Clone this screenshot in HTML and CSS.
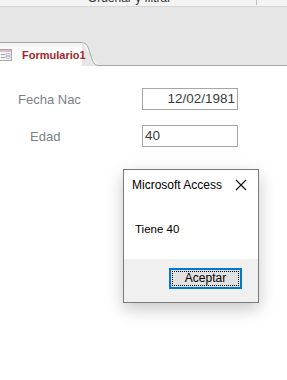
FILE: index.html
```html
<!DOCTYPE html>
<html lang="es">
<head>
    <meta charset="UTF-8">
    <title>Formulario1</title>
    <link rel="stylesheet" href="styles.css">
</head>
<body>
    <div class="ribbon-bottom">
        <span class="ribbon-group">Ordenar y filtrar</span>
        <span class="ribbon-sep"></span>
    </div>
    <div class="ribbon-space"></div>

    <div class="tab-strip">
        <div class="tab">
            <svg class="tab-icon" width="13" height="12" viewBox="0 0 13 12">
                <rect x="0.5" y="0.5" width="12" height="11" fill="#f4f4f4" stroke="#b7a3ad"/>
                <rect x="1" y="1" width="11" height="2" fill="#e2b9c8"/>
                <rect x="2" y="5" width="4" height="1" fill="#9aa6b4"/>
                <rect x="7" y="4.5" width="4" height="2" fill="#fff" stroke="#9aa6b4" stroke-width="0.6"/>
                <rect x="2" y="8" width="4" height="1" fill="#9aa6b4"/>
                <rect x="7" y="7.5" width="4" height="2" fill="#fff" stroke="#9aa6b4" stroke-width="0.6"/>
            </svg>
            <span class="tab-title">Formulario1</span>
        </div>
        <svg class="tab-edge" width="16" height="24" viewBox="0 0 16 24">
            <path d="M0 0.5 Q4 0.5 5.5 4 L11 19.5 Q12.5 23.5 16 23.5" fill="#fdfdfd" stroke="#a8a8a8"/>
        </svg>
        <div class="tab-fill"></div>
    </div>

    <main class="form">
        <div class="form-row">
            <label class="field-label">Fecha Nac</label>
            <div class="field-box right">12/02/1981</div>
        </div>
        <div class="form-row">
            <label class="field-label indent">Edad</label>
            <div class="field-box">40</div>
        </div>

        <div class="msgbox">
            <div class="msgbox-title">
                <span>Microsoft Access</span>
                <svg width="12" height="12" viewBox="0 0 12 12">
                    <path d="M1 1 L11 11 M11 1 L1 11" stroke="#111" stroke-width="1.1"/>
                </svg>
            </div>
            <div class="msgbox-body">Tiene 40</div>
            <div class="msgbox-footer">
                <button class="msgbox-button"><span>Aceptar</span></button>
            </div>
        </div>
    </main>
</body>
</html>
```

FILE: styles.css
```css
* {
    margin: 0;
    padding: 0;
    box-sizing: border-box;
}

body {
    width: 287px;
    height: 380px;
    overflow: hidden;
    background-color: #fff;
    font-family: "Liberation Sans", Arial, sans-serif;
}

.ribbon-bottom {
    height: 7px;
    background-color: #f3f3f3;
    border-bottom: 1px solid #d5d5d5;
    display: flex;
    justify-content: center;
    align-items: flex-end;
    position: relative;
    overflow: hidden;
}

.ribbon-group {
    font-size: 12px;
    line-height: 12px;
    color: #333;
    margin-bottom: 2px;
    margin-right: 28px;
}

.ribbon-sep {
    position: absolute;
    left: 256px;
    top: 0;
    width: 1px;
    height: 5px;
    background-color: #bcbcbc;
}

.ribbon-space {
    height: 35px;
    background-color: #e6e6e6;
}

.tab-strip {
    height: 24px;
    display: flex;
    background-color: #e6e6e6;
}

.tab {
    width: 82px;
    flex: none;
    display: flex;
    align-items: center;
    border-top: 1px solid #a8a8a8;
    background: linear-gradient(#f3f3f3, #ffffff 40%);
    padding-top: 1px;
    white-space: nowrap;
}

.tab-icon {
    flex: none;
    margin-left: -1px;
    margin-right: 10px;
}

.tab-title {
    font-size: 11px;
    font-weight: bold;
    color: #a4262c;
}

.tab-edge {
    display: block;
    flex: none;
}

.tab-fill {
    flex: 1;
    border-bottom: 1px solid #a8a8a8;
}

.form {
    position: relative;
    height: 314px;
    padding-top: 22px;
}

.form-row {
    display: flex;
    align-items: center;
    height: 22px;
    margin-bottom: 15px;
}

.field-label {
    width: 142px;
    padding-left: 18px;
    font-size: 13px;
    color: #7b7f86;
}

.field-label.indent {
    padding-left: 30px;
}

.field-box {
    width: 96px;
    height: 22px;
    border: 1px solid #a6a6a6;
    font-size: 13.5px;
    line-height: 20px;
    color: #3b3b3b;
    padding: 0 2px;
}

.field-box.right {
    text-align: right;
}

.msgbox {
    position: absolute;
    left: 123px;
    top: 103px;
    width: 136px;
    height: 134px;
    border: 1px solid #7a7a7a;
    background-color: #fff;
    box-shadow: 0 6px 16px rgba(0, 0, 0, 0.22);
    display: flex;
    flex-direction: column;
    font-size: 12px;
    color: #000;
}

.msgbox-title {
    height: 30px;
    display: flex;
    justify-content: space-between;
    align-items: center;
    padding: 0 11px 0 8px;
}

.msgbox-body {
    height: 59px;
    padding: 23px 0 0 11px;
    font-size: 11.5px;
}

.msgbox-footer {
    flex: 1;
    background-color: #f0f0f0;
    display: flex;
    justify-content: flex-end;
    padding: 9px 16px 0 0;
}

.msgbox-button {
    width: 73px;
    height: 21px;
    border: 2px solid #0078d7;
    background-color: #e1e1e1;
    padding: 1px;
    font-family: "Liberation Sans", Arial, sans-serif;
    font-size: 12px;
    color: #000;
}

.msgbox-button span {
    display: block;
    height: 100%;
    border: 1px dotted #000;
    line-height: 13px;
}
```
